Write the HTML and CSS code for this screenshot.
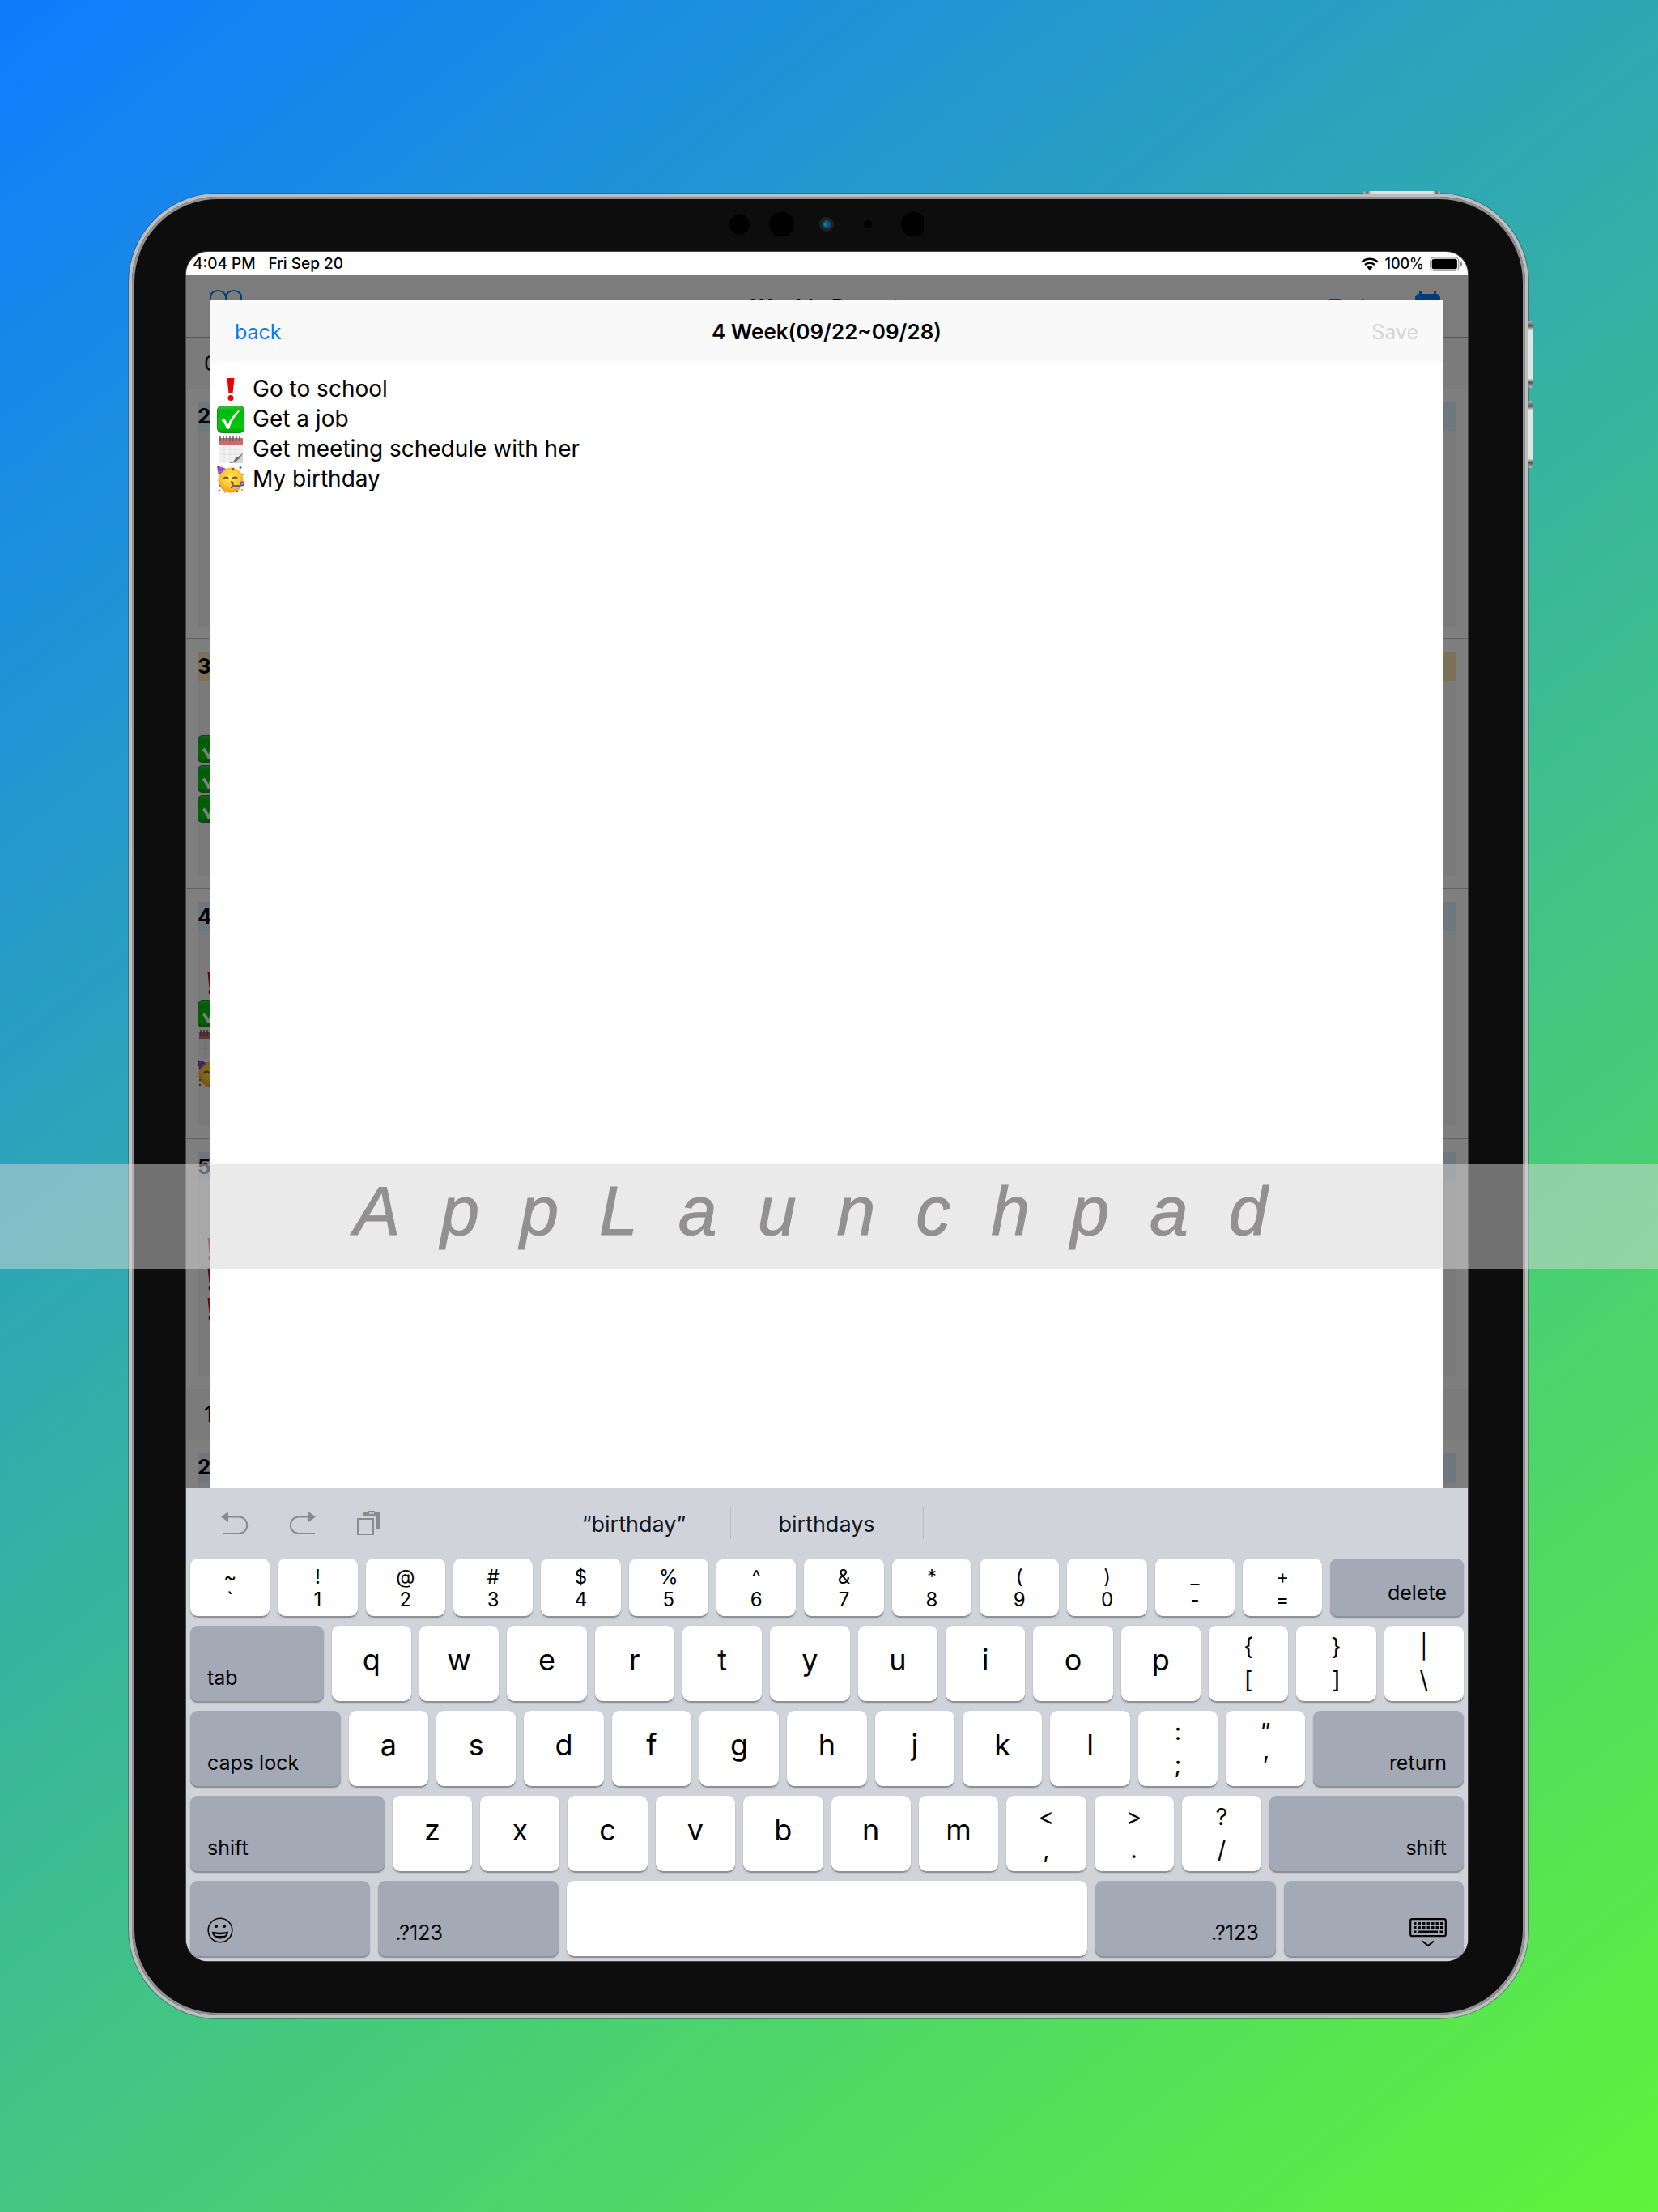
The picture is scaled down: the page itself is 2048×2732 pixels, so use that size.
FILE: index.html
```html
<!DOCTYPE html>
<html lang="en">
<head>
<meta charset="utf-8">
<meta name="viewport" content="width=device-width, initial-scale=1">
<title>Weekly Report</title>
<link rel="stylesheet" href="styles.css">
</head>
<body>
<svg class="defs" aria-hidden="true">
  <defs>
    <linearGradient id="g-green" x1="0" y1="0" x2="0" y2="1"><stop offset="0" stop-color="#2fc13a"/><stop offset=".2" stop-color="#00b90c"/><stop offset=".8" stop-color="#00c80a"/><stop offset="1" stop-color="#0a9a14"/></linearGradient>
    <radialGradient id="g-face" cx=".5" cy=".4" r=".6"><stop offset="0" stop-color="#ffe566"/><stop offset=".6" stop-color="#fdc92f"/><stop offset="1" stop-color="#ee9a1c"/></radialGradient>
    <symbol id="e-bang" viewBox="0 0 34 34"><path d="M12.500 3h9l-2 19h-5z" fill="#e30505"/><circle cx="17" cy="27.500" r="3.500" fill="#e30505"/></symbol>
    <symbol id="e-check" viewBox="0 0 34 34"><rect width="34" height="34" rx="6" fill="#138a1c"/><rect x="1" y="1" width="32" height="32" rx="5" fill="url(#g-green)"/><path d="M5.500 18.500l3-3c2 2 4 5 5 8C16 17 20.500 10.500 26.500 6l1.500 1C22 13 18 20 15 29h-2.500c-2-4.500-4-8-7-10.500z" fill="#fff"/></symbol>
    <symbol id="e-cal" viewBox="0 0 34 34"><path d="M2 4h30v27l-15 3H2z" fill="#f1f1f1"/><path d="M2 3h30v8H2z" fill="#c96a6c"/><path d="M4 0v7M8 0v7M12 0v7M16 0v7M20 0v7M24 0v7M28 0v7" stroke="#5a5a60" stroke-width="1.500"/><path d="M2 17h30M2 23h30M9 11v22M16 11v22M23 11v14" stroke="#dedede"/><path d="M32 20v14H14c7-1 8-3 9-7 4 0 7-3 9-7z" fill="#d2d2d2"/><path d="M32 20c-2 5-6 6-9 7-1 4-4 6-8 7 8 0 15-6 17-14z" fill="#6f6f6f"/></symbol>
    <symbol id="e-party" viewBox="0 0 34 34"><circle cx="17" cy="18" r="15.500" fill="url(#g-face)"/><path d="M0 0l11 4L2 12z" fill="#6146b4"/><path d="M2 4l6-2M2 9l8-5" stroke="#d05ac0" stroke-width="1.500"/><path d="M8 16c2-2 5-2 6 0M19 16c2-2 5-2 6 0" fill="none" stroke="#7a4a12" stroke-width="1.800"/><path d="M17 20c4 0 4 3 1 3.500 3 .5 3 3.500-1 4" fill="none" stroke="#7a4a12" stroke-width="1.500"/><path d="M20 24h9v2h-9z" fill="#5a55c0"/><circle cx="31" cy="22.500" r="2" fill="none" stroke="#5a55c0" stroke-width="2"/><circle cx="20" cy="4" r="1.300" fill="#d8372c"/><circle cx="29" cy="2.500" r="1.500" fill="#3d6fd8"/><circle cx="32" cy="11" r="1.200" fill="#f0a020"/><circle cx="3" cy="25" r="1.200" fill="#3d6fd8"/><circle cx="3" cy="31" r="1.300" fill="#d8372c"/><circle cx="10" cy="33" r="1" fill="#f0a020"/><circle cx="25" cy="32" r="1.200" fill="#d8372c"/><circle cx="31" cy="30" r="1.200" fill="#e8a030"/></symbol>
  </defs>
</svg>

<main class="device">
  <span class="hw hw-power"></span>
  <span class="hw hw-vol-up"></span>
  <span class="hw hw-vol-down"></span>
  <svg class="sensors" width="240" height="34" viewBox="0 0 240 34" aria-hidden="true">
    <circle cx="12.500" cy="17" r="12.500" fill="#020202"/><circle cx="64.500" cy="17" r="15.500" fill="#020202"/>
    <circle cx="120" cy="17" r="9" fill="#202122"/><circle cx="120" cy="17" r="5" fill="#0f4f72"/><circle cx="119" cy="17" r="2.500" fill="#1773a3"/>
    <circle cx="171" cy="17" r="5" fill="#020202"/><circle cx="227.500" cy="17" r="15.500" fill="#020202"/>
  </svg>

  <div class="screen">
    <div class="status">
      <span>4:04 PM</span><span>Fri Sep 20</span>
      <span class="status-right">
        <svg width="22" height="16" viewBox="0 0 22 16" aria-hidden="true"><path d="M1.500 5.500a14 14 0 0 1 19 0M5 9a9 9 0 0 1 12 0" fill="none" stroke="#000" stroke-width="2.600"/><path d="M7.500 12a5 5 0 0 1 7 0L11 16z"/></svg>
        <span>100%</span>
        <svg width="41" height="18" viewBox="0 0 41 18" aria-hidden="true"><rect x=".8" y=".8" width="35" height="16.400" rx="4.500" fill="none" stroke="#8c8c8c" stroke-width="1.200"/><rect x="2.700" y="2.700" width="31.200" height="12.600" rx="2.500"/><path d="M38 6c3 1 3 5 0 6z" fill="#8c8c8c"/></svg>
      </span>
    </div>

    <div class="stage">
      <div class="planner" aria-hidden="true">
        <div class="planner-nav">
          <svg width="40" height="42" viewBox="0 0 40 42"><path d="M1 40V8C5 0 17 0 20 9c3-9 15-9 19-1v32M20 9v31" fill="none" stroke="#007aff" stroke-width="2"/></svg>
          <strong>Weekly Report</strong>
          <span class="planner-actions"><span>Today</span>
          <svg width="31" height="36" viewBox="0 0 31 36"><path d="M5 0h3v3h15V0h3v3c3 0 5 2 5 5v28H0V8c0-3 2-5 5-5z" fill="#007aff"/></svg></span>
        </div>
        <div class="section">09</div>
        <div class="week"><div class="week-title">2</div><div class="week-body"></div></div>
        <div class="week"><div class="week-title current">3</div><div class="week-body">
          <svg class="emoji"><use href="#e-check"/></svg><svg class="emoji"><use href="#e-check"/></svg><svg class="emoji"><use href="#e-check"/></svg></div></div>
        <div class="week"><div class="week-title">4</div><div class="week-body">
          <svg class="emoji"><use href="#e-bang"/></svg><svg class="emoji"><use href="#e-check"/></svg><svg class="emoji"><use href="#e-cal"/></svg><svg class="emoji"><use href="#e-party"/></svg></div></div>
        <div class="week last"><div class="week-title">5</div><div class="week-body">
          <svg class="emoji"><use href="#e-bang"/></svg><svg class="emoji"><use href="#e-bang"/></svg><svg class="emoji"><use href="#e-bang"/></svg></div></div>
        <div class="section">10</div>
        <div class="week"><div class="week-title">2</div><div class="week-body"></div></div>
      </div>

      <section class="sheet">
        <header class="sheet-nav">
          <button class="link" type="button">back</button>
          <h1>4 Week(09/22~09/28)</h1>
          <button class="link" type="button" disabled>Save</button>
        </header>
        <div class="note" role="textbox" aria-multiline="true" aria-label="Weekly note" contenteditable="true">
          <p><svg class="emoji"><use href="#e-bang"/></svg>Go to school</p>
          <p><svg class="emoji"><use href="#e-check"/></svg>Get a job</p>
          <p><svg class="emoji"><use href="#e-cal"/></svg>Get meeting schedule with her</p>
          <p><svg class="emoji"><use href="#e-party"/></svg>My birthday</p>
        </div>
      </section>
    </div>

    <div class="keyboard">
      <div class="suggest">
        <div class="tools">
          <button type="button" aria-label="Undo"><svg width="34" height="30" viewBox="0 0 34 30"><path d="M8 7.500h14a10 10 0 0 1 0 20.500H2" fill="none" stroke="#898b8f" stroke-width="2"/><path d="M0 7.500L9 1v13z" fill="#898b8f"/></svg></button>
          <button type="button" aria-label="Redo"><svg width="34" height="30" viewBox="0 0 34 30"><path d="M25 7.500H12A10 10 0 0 0 12 28h20" fill="none" stroke="#898b8f" stroke-width="2"/><path d="M33 7.500L24 1v13z" fill="#898b8f"/></svg></button>
          <button type="button" aria-label="Paste"><svg width="30" height="30" viewBox="0 0 30 30"><path d="M1 10h19v19H1z" fill="none" stroke="#898b8f" stroke-width="2"/><path d="M7 7V4q0-2 2-2h5V0h8v2h5q2 0 2 2v17q0 2-2 2h-4V7z" fill="#898b8f"/><path d="M15 3h6" stroke="#d0d3da" stroke-width="1.500"/></svg></button>
        </div>
        <button type="button" class="word">“birthday”</button>
        <button type="button" class="word">birthdays</button>
        <span class="word"></span>
      </div>

      <div class="keys row-num">
        <button class="key dual"><span>~</span><span>`</span></button>
        <button class="key dual"><span>!</span><span>1</span></button>
        <button class="key dual"><span>@</span><span>2</span></button>
        <button class="key dual"><span>#</span><span>3</span></button>
        <button class="key dual"><span>$</span><span>4</span></button>
        <button class="key dual"><span>%</span><span>5</span></button>
        <button class="key dual"><span>^</span><span>6</span></button>
        <button class="key dual"><span>&amp;</span><span>7</span></button>
        <button class="key dual"><span>*</span><span>8</span></button>
        <button class="key dual"><span>(</span><span>9</span></button>
        <button class="key dual"><span>)</span><span>0</span></button>
        <button class="key dual"><span>_</span><span>-</span></button>
        <button class="key dual"><span>+</span><span>=</span></button>
        <button class="key mod right">delete</button>
      </div>
      <div class="keys row-tab">
        <button class="key mod">tab</button>
        <button class="key">q</button><button class="key">w</button><button class="key">e</button><button class="key">r</button><button class="key">t</button><button class="key">y</button><button class="key">u</button><button class="key">i</button><button class="key">o</button><button class="key">p</button>
        <button class="key dual"><span>{</span><span>[</span></button>
        <button class="key dual"><span>}</span><span>]</span></button>
        <button class="key dual"><span>|</span><span>\</span></button>
      </div>
      <div class="keys row-caps">
        <button class="key mod">caps lock</button>
        <button class="key">a</button><button class="key">s</button><button class="key">d</button><button class="key">f</button><button class="key">g</button><button class="key">h</button><button class="key">j</button><button class="key">k</button><button class="key">l</button>
        <button class="key dual"><span>:</span><span>;</span></button>
        <button class="key dual"><span>”</span><span>’</span></button>
        <button class="key mod right">return</button>
      </div>
      <div class="keys row-shift">
        <button class="key mod">shift</button>
        <button class="key">z</button><button class="key">x</button><button class="key">c</button><button class="key">v</button><button class="key">b</button><button class="key">n</button><button class="key">m</button>
        <button class="key dual"><span>&lt;</span><span>,</span></button>
        <button class="key dual"><span>&gt;</span><span>.</span></button>
        <button class="key dual"><span>?</span><span>/</span></button>
        <button class="key mod right">shift</button>
      </div>
      <div class="keys row-space">
        <button class="key mod" aria-label="Emoji"><svg width="32" height="32" viewBox="0 0 32 32"><circle cx="16" cy="16" r="14.800" fill="none" stroke="#000" stroke-width="1.600"/><circle cx="11" cy="11" r="2.100"/><circle cx="21" cy="11" r="2.100"/><path d="M6 17.500c3 1.500 17 1.500 20 0 0 12-20 12-20 0z"/><path d="M8.500 20c4 1.500 11 1.500 15 0l-1.500 2.500c-3 .8-9 .8-12 0z" fill="#a4aab5"/></svg></button>
        <button class="key mod">.?123</button>
        <button class="key" aria-label="Space"></button>
        <button class="key mod right">.?123</button>
        <button class="key mod right" aria-label="Hide keyboard"><svg class="hide-icon" width="46" height="36" viewBox="0 0 46 36"><rect x="1.200" y="1.200" width="43.600" height="21" rx="2" fill="none" stroke="#000" stroke-width="2.200"/><path d="M5 6.500h36M5 11.500h36" stroke="#000" stroke-width="3" stroke-dasharray="3.500 2"/><path d="M5 17h3.500M11 17h24M37.500 17H41" stroke="#000" stroke-width="3"/><path d="M16 28.500l7 5.500 7-5.500" fill="none" stroke="#000" stroke-width="2"/></svg></button>
      </div>
    </div>
  </div>
</main>
<div class="watermark">AppLaunchpad</div>
</body>
</html>
```

FILE: styles.css
```css
* { box-sizing: border-box; }

body {
  position: relative;
  margin: 0;
  min-height: 100vh;
  padding: 239px 160px 239px 159px;
  background: linear-gradient(142deg, #0f7bff, #38b69c 49%, #60f33a);
  font-family: Inter, "Liberation Sans", sans-serif;
  color: #000;
}

button {
  margin: 0;
  padding: 0;
  border: 0;
  background: none;
  font: inherit;
  color: inherit;
}

.defs { position: absolute; width: 0; height: 0; }

/* Tablet body */
.device {
  position: relative;
  padding: 68px 71px 67px 67px;
  border: 4px solid #bcbec0;
  border-radius: 110px;
  background: #0d0d0d;
  box-shadow: inset 0 0 0 3px #8f8f92, 0 0 0 1px rgba(60, 70, 80, .5);
}
.hw {
  position: absolute;
  border-radius: 2px;
  background: linear-gradient(to bottom, #bbb, #555 8%, #e4e4e4 14%, #e4e4e4 86%, #555 92%, #bbb);
}
.hw-power {
  top: -7px;
  right: 105px;
  width: 95px;
  height: 4px;
  background: linear-gradient(to right, #bbb, #666 5%, #e0e0e0 10%, #e0e0e0 90%, #666 95%, #bbb);
}
.hw-vol-up, .hw-vol-down { right: -9px; width: 5px; height: 83px; }
.hw-vol-up { top: 153px; }
.hw-vol-down { top: 252px; }
.sensors { position: absolute; top: 17px; left: 0; right: 5px; margin: 0 auto; }

.screen {
  border-radius: 27px;
  overflow: hidden;
  background: #fff;
  box-shadow: 0 0 0 1px #444;
}

.status {
  display: flex;
  align-items: center;
  gap: 16px;
  height: 29px;
  padding: 0 6px 0 8px;
  font-size: 19px;
  font-weight: 500;
}
.status-right {
  display: flex;
  align-items: center;
  gap: 7px;
  margin-left: auto;
  font-size: 18px;
}

/* Planner page, dimmed behind the sheet */
.stage { position: relative; padding: 31px 30px 0 29px; }
.planner {
  position: absolute;
  inset: 0;
  overflow: hidden;
  background: #fff;
}
.planner::after {
  content: "";
  position: absolute;
  inset: 0;
  background: rgba(0, 0, 0, .5);
}
.planner-nav {
  display: grid;
  grid-template-columns: 1fr auto 1fr;
  align-items: center;
  height: 78px;
  padding: 0 34px 0 29px;
  border-bottom: 2px solid #aaa;
  background: #f8f8f8;
  font-size: 26px;
}
.planner-nav strong { font-weight: 600; }
.planner-actions {
  display: flex;
  align-items: center;
  justify-content: flex-end;
  gap: 33px;
  color: #007aff;
}
.section {
  height: 62px;
  padding-left: 22px;
  background: #f6f6f6;
  font-size: 26px;
  line-height: 62px;
}
.week {
  padding: 16px 15px 15px 14px;
  border-bottom: 1px solid #c4c4c4;
}
.week.last { border-bottom-color: transparent; }
.week-title {
  height: 36px;
  background: #dfeffc;
  font-size: 26px;
  font-weight: 700;
  line-height: 36px;
}
.week-title.current { background: #ffe3b0; }
.week-body {
  display: flex;
  flex-direction: column;
  justify-content: center;
  gap: 3px;
  height: 241px;
  background: #f4f4f4;
}
.emoji { flex: none; width: 34px; height: 34px; }

/* Note editor */
.sheet { position: relative; background: #fff; }
.sheet-nav {
  display: grid;
  grid-template-columns: 1fr auto 1fr;
  align-items: center;
  height: 77px;
  padding: 0 31px;
  background: #f9f9f9;
}
.sheet-nav h1 { margin: 0; font-size: 26px; font-weight: 600; }
.link { justify-self: start; font-size: 25px; color: #007aff; }
.link:disabled { justify-self: end; color: #d5d5d5; }
.note {
  min-height: 1390px;
  padding: 14px 9px;
  outline: 0;
  font-size: 28px;
  line-height: 37px;
}
.note p { display: flex; align-items: center; gap: 10px; margin: 0; }

/* Keyboard */
.keyboard {
  display: flex;
  flex-direction: column;
  gap: 10px;
  padding: 0 5px 4px;
  background: #d0d3da;
}
.suggest {
  display: grid;
  grid-template-columns: minmax(0, 1fr) repeat(3, 238px) minmax(0, 1fr);
  align-items: center;
  height: 77px;
  padding-top: 9px;
}
.tools { display: flex; gap: 50px; padding-left: 38px; }
.tools svg { display: block; }
.word {
  height: 40px;
  padding-top: 4px;
  border-right: 1px solid #b9bcc2;
  font-size: 27px;
  line-height: 36px;
  color: #16171a;
}
span.word { border-right: 0; }

.keys { display: grid; gap: 10px; height: 95px; }
.row-num { grid-template-columns: repeat(13, 98fr) 164fr; height: 73px; }
.row-tab { grid-template-columns: 164fr repeat(13, 98fr); }
.row-caps { grid-template-columns: 185fr repeat(11, 98fr) 185fr; }
.row-shift { grid-template-columns: 239fr repeat(10, 98fr) 239fr; }
.row-space { grid-template-columns: 222fr 222fr 643fr 222fr 222fr; }
.key {
  min-width: 0;
  padding-bottom: 12px;
  border-radius: 9px;
  background: #fff;
  box-shadow: 0 1px 1px 1px rgba(0, 0, 0, .06), inset 0 -2px 0 #8f9196;
  font-size: 36px;
  line-height: 40px;
}
.dual {
  display: flex;
  flex-direction: column;
  align-items: center;
  justify-content: center;
  padding: 0 0 4px;
  font-size: 29px;
  line-height: 41px;
}
.row-num .dual { padding: 0; font-size: 24px; line-height: 28px; }
.mod {
  display: flex;
  align-items: flex-end;
  padding: 0 21px 13px;
  background: #a4aab5;
  font-size: 25px;
  line-height: 36px;
}
.mod svg { margin-bottom: 5px; }
.mod .hide-icon { margin-bottom: 0; }
.right { justify-content: flex-end; }

/* Watermark band across the artwork */
.watermark {
  position: absolute;
  top: 1438px;
  left: 0;
  right: 0;
  height: 129px;
  padding-left: 437px;
  background: rgba(213, 213, 213, .5);
  font: italic 86px/115px "Liberation Sans", sans-serif;
  letter-spacing: 50px;
  -webkit-text-stroke: 1px #929090;
  white-space: nowrap;
  overflow: hidden;
  color: #929090;
}
```
